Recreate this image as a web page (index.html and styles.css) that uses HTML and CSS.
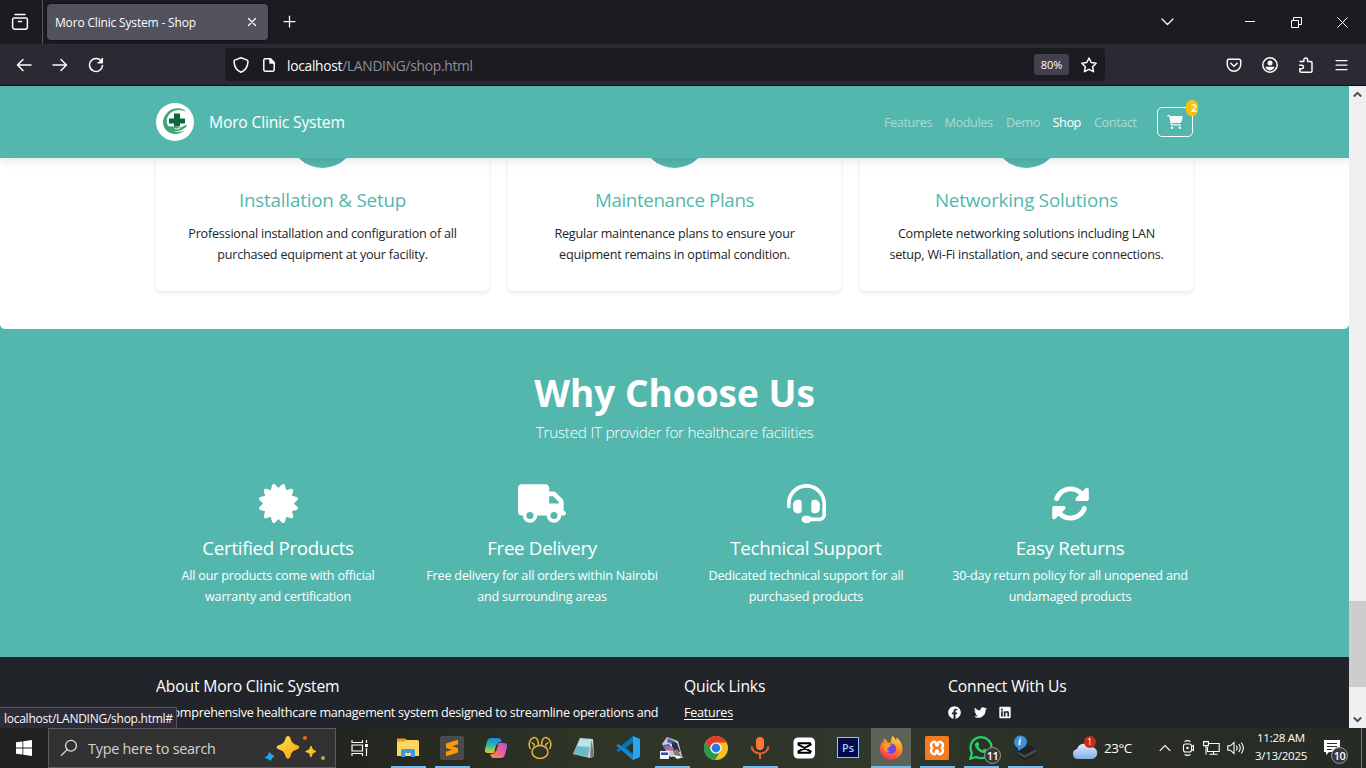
FILE: index.html
```
<!DOCTYPE html>
<html lang="en">
<head>
<meta charset="utf-8">
<title>Moro Clinic System - Shop</title>
<link rel="stylesheet" href="styles.css">
</head>
<body>
<div class="screen">
  <header class="tabbar">
    <div class="recent"><svg width="18" height="18" viewBox="0 0 18 18" class="ln"><path d="M4 1.6h10M3.2 5h11.6a1.6 1.6 0 0 1 1.6 1.6V14a2.2 2.2 0 0 1-2.2 2.2H3.8A2.2 2.2 0 0 1 1.600 14V6.600A1.600 1.600 0 0 1 3.200 5zM7.500 8.500h3"/></svg></div>
    <div class="tab"><span class="tab-title">Moro Clinic System - Shop</span><svg width="10" height="10" viewBox="0 0 10 10" class="ln thin"><path d="M1.500 1.500l7 7M8.500 1.500l-7 7"/></svg></div>
    <svg class="ln thin plus" width="14" height="14" viewBox="0 0 14 14"><path d="M6.500 1v11M1 6.500h11"/></svg>
    <div class="win">
      <svg class="ln thin" width="14" height="10" viewBox="0 0 14 10"><path d="M2 2l5.500 5.500L13 2"/></svg>
      <svg class="px w1" width="10" height="11" viewBox="0 0 10 11"><path d="M0 4.500h10"/></svg>
      <svg class="px w2" width="11" height="11" viewBox="0 0 11 11"><path d="M.5 3.500h7v7h-7zM2.500 3V.5h8v7H8"/></svg>
      <svg class="px w3" width="11" height="11" viewBox="0 0 11 11"><path d="M.5.5l10 10M10.500.5l-10 10"/></svg>
    </div>
  </header>
  <div class="toolbar">
    <div class="nav-btns">
      <svg class="ln" width="16" height="16" viewBox="0 0 16 16"><path d="M15 8H1.500M7 2.500L1.500 8 7 13.500"/></svg>
      <svg class="ln" width="16" height="16" viewBox="0 0 16 16"><path d="M1 8h13.500M9 2.500L14.500 8 9 13.500"/></svg>
      <svg class="ln" width="16" height="16" viewBox="0 0 16 16"><path d="M13.800 5A6.500 6.500 0 1 0 14.500 8.500M14.300 1.500v4.200h-4.200"/><path d="M15 .8V6H9.800z" fill="#fbfbfe" stroke="none"/></svg>
    </div>
    <div class="urlbar">
      <svg class="ln" width="16" height="16" viewBox="0 0 16 16"><path d="M8 .8l6.200 2.300c.9.4.8 1 .7 2C14.600 10 12 13.500 8 15.300 4 13.500 1.400 10 1.100 5.100c-.1-1-.2-1.600.7-2z"/></svg>
      <svg class="ln doc" width="12" height="14" viewBox="0 0 12 14"><path d="M2.500.8H7.500L11.200 4.500v7.200a1.500 1.500 0 0 1-1.500 1.500H2.300a1.500 1.500 0 0 1-1.500-1.500V2.300A1.500 1.500 0 0 1 2.500.8z"/><path d="M7 .8V5h4.200z" fill="#fbfbfe"/></svg>
      <span class="url">localhost<i>/LANDING/shop.html</i></span>
      <span class="zoom">80%</span>
      <svg class="ln star" width="16" height="16" viewBox="0 0 16 16"><path d="M8 1l2.200 4.500 5 .7-3.600 3.500.9 5L8 12.300 3.500 14.700l.9-5L.8 6.200l5-.7z"/></svg>
    </div>
    <div class="tools">
      <svg class="ln" width="16" height="16" viewBox="0 0 16 16"><path d="M2.800 2.300h10.400a1.500 1.500 0 0 1 1.500 1.500V7.500a6.700 6.700 0 0 1-13.400 0V3.800a1.500 1.500 0 0 1 1.500-1.500zM4.800 6.200L8 9.200l3.200-3"/></svg>
      <svg class="ln" width="16" height="16" viewBox="0 0 16 16"><circle cx="8" cy="8" r="7.200"/><circle cx="8" cy="6" r="2.500" fill="#fbfbfe" stroke="none"/><path d="M3.600 9.800h8.800c0 2-2 3.600-4.400 3.600s-4.400-1.600-4.400-3.600z" fill="#fbfbfe" stroke="none"/></svg>
      <svg class="ln" width="16" height="16" viewBox="0 0 16 16"><path d="M2 4.500h3.800V3a1.900 1.900 0 0 1 3.800 0v1.500h3.200a1.200 1.200 0 0 1 1.200 1.200V14a1.200 1.200 0 0 1-1.200 1.200H3A1.200 1.200 0 0 1 1.800 14v-2.300h2a1.700 1.700 0 0 0 0-3.400h-2"/></svg>
      <svg class="ln thin" width="14" height="16" viewBox="0 0 14 16"><path d="M1 3.500h11M1 8h11M1 12.500h11"/></svg>
    </div>
  </div>

  <div class="viewport">
    <main class="page">
      <nav class="site-nav">
        <div class="wrap nav-row">
          <svg class="logo" width="38" height="38" viewBox="0 0 38 38"><circle cx="19" cy="19" r="19" fill="#fff"/><path d="M30 8.500C26 4.500 18 4 12.500 8.500 6 14 5.500 22 10 27c5 5.500 14 5 18.500.5-4 2-10 2-14-1.500-5-4.500-5-12 0-16 4-3.500 10-4 15.500-1.500z" fill="#3fa572"/><path d="M11 23c3.500.5 5.500.3 8 .5 2 .3 3.500.5 5 1.300l6-2.800c1.500 0 1 1.300-.5 2.500-3.500 3-8 4.500-12.500 3.500-3-.7-5-2.500-6-5z" fill="#3fa572"/><path d="M18.500 25.600c2 .6 4 .5 5.500-.4" fill="none" stroke="#fff" stroke-width=".9"/><path d="M18 10.500h6v5h5v5h-5v3h-6v-3h-5v-5h5z" fill="#07693c"/></svg>
          <span class="brand">Moro Clinic System</span>
          <div class="menu"><a style="width:48px">Features</a><a style="width:49px">Modules</a><a style="width:34px">Demo</a><a class="on" style="width:29px">Shop</a><a style="width:44px">Contact</a></div>
          <div class="cart"><svg width="16" height="14" viewBox="0 0 576 512"><path d="M0 24C0 10.700 10.700 0 24 0H69.500c22 0 41.500 12.800 50.600 32h411c26.300 0 45.500 25 38.600 50.400l-41 152.300c-8.500 31.400-37 53.300-69.500 53.300H170.700l5.400 28.500c2.200 11.300 12.100 19.500 23.600 19.500H488c13.300 0 24 10.700 24 24s-10.700 24-24 24H199.700c-34.600 0-64.300-24.600-70.700-58.500L77.400 54.500c-.7-3.800-4-6.500-7.900-6.500H24C10.700 48 0 37.300 0 24zM128 464a48 48 0 1 1 96 0 48 48 0 1 1 -96 0zm336-48a48 48 0 1 1 0 96 48 48 0 1 1 0-96z"/></svg><b class="count">2</b></div>
        </div>
      </nav>
      <section class="services">
        <div class="wrap cards">
          <article class="card"><div class="disc"></div><h3 class="open">Installation &amp; Setup</h3><p>Professional installation and configuration of all<br>purchased equipment at your facility.</p></article>
          <article class="card"><div class="disc"></div><h3>Maintenance Plans</h3><p>Regular maintenance plans to ensure your<br>equipment remains in optimal condition.</p></article>
          <article class="card"><div class="disc"></div><h3 class="open">Networking Solutions</h3><p>Complete networking solutions including LAN<br>setup, Wi-Fi installation, and secure connections.</p></article>
        </div>
      </section>
      <section class="why">
        <h2>Why Choose Us</h2>
        <p class="lead">Trusted IT provider for healthcare facilities</p>
        <div class="features">
          <div class="feature"><svg width="39" height="39" viewBox="0 0 512 512"><path d="M211 7.300C205 1 196-1.400 187.600 .8s-14.900 8.900-17.100 17.300L154.700 80.600l-62-17.500c-8.400-2.400-17.400 0-23.500 6.100s-8.500 15.100-6.100 23.500l17.500 62L18.100 170.600c-8.400 2.100-15 8.700-17.300 17.100S1 205 7.300 211l46.200 45L7.300 301C1 307-1.400 316 .8 324.400s8.900 14.900 17.300 17.100l62.500 15.800-17.500 62c-2.400 8.400 0 17.400 6.100 23.500s15.100 8.500 23.500 6.100l62-17.500 15.800 62.500c2.100 8.400 8.700 15 17.100 17.300s17.300-.2 23.400-6.400l45-46.200 45 46.200c6.100 6.200 15 8.700 23.400 6.400s14.900-8.900 17.100-17.300l15.800-62.500 62 17.500c8.400 2.400 17.400 0 23.500-6.100s8.500-15.100 6.100-23.500l-17.500-62 62.500-15.800c8.400-2.100 15-8.700 17.300-17.100s-.2-17.300-6.400-23.400l-46.200-45 46.200-45c6.200-6.100 8.700-15 6.400-23.400s-8.900-14.900-17.300-17.100l-62.500-15.800 17.500-62c2.400-8.400 0-17.400-6.100-23.500s-15.100-8.500-23.500-6.100l-62 17.500L341.400 18.100c-2.100-8.400-8.700-15-17.100-17.300S307 1 301 7.300L256 53.500 211 7.300z"/></svg><h4>Certified Products</h4><p>All our products come with official<br>warranty and certification</p></div>
          <div class="feature"><svg width="48" height="39" viewBox="0 0 640 512"><path d="M48 0C21.500 0 0 21.500 0 48V368c0 26.500 21.500 48 48 48H64c0 53 43 96 96 96s96-43 96-96H384c0 53 43 96 96 96s96-43 96-96h32c17.700 0 32-14.300 32-32s-14.300-32-32-32V237.300c0-17-6.700-33.300-18.700-45.300L512 114.700c-12-12-28.300-18.700-45.300-18.700H416V48c0-26.500-21.500-48-48-48H48zM416 160h50.700L544 237.300V256H416V160zM112 416a48 48 0 1 1 96 0 48 48 0 1 1 -96 0zm368-48a48 48 0 1 1 0 96 48 48 0 1 1 0-96z"/></svg><h4>Free Delivery</h4><p>Free delivery for all orders within Nairobi<br>and surrounding areas</p></div>
          <div class="feature"><svg width="39" height="39" viewBox="0 0 512 512"><path d="M256 48C141.100 48 48 141.100 48 256v40c0 13.300-10.700 24-24 24s-24-10.700-24-24V256C0 114.600 114.600 0 256 0S512 114.600 512 256V400.100c0 48.600-39.400 88-88.100 88L313.600 488c-8.300 14.300-23.800 24-41.600 24H240c-26.500 0-48-21.500-48-48s21.500-48 48-48h32c17.800 0 33.300 9.700 41.600 24l110.400 .1c22.100 0 40-17.900 40-40V256c0-114.900-93.100-208-208-208zM144 208h16c17.700 0 32 14.300 32 32V352c0 17.700-14.300 32-32 32H144c-35.300 0-64-28.700-64-64V272c0-35.300 28.700-64 64-64zm224 0c35.300 0 64 28.700 64 64v48c0 35.300-28.700 64-64 64H352c-17.700 0-32-14.300-32-32V240c0-17.700 14.300-32 32-32h16z"/></svg><h4>Technical Support</h4><p>Dedicated technical support for all<br>purchased products</p></div>
          <div class="feature"><svg width="39" height="39" viewBox="0 0 512 512"><path d="M142.900 142.900c62.200-62.200 162.700-62.500 225.300-1L327 183c-6.900 6.900-8.900 17.200-5.200 26.200s12.500 14.800 22.200 14.800H472c13.300 0 24-10.700 24-24V72c0-9.700-5.800-18.500-14.800-22.200s-19.300-1.700-26.200 5.200L413.400 96.600c-87.600-86.500-228.700-86.200-315.800 1C73.200 122 55.600 150.700 44.800 181.400c-5.900 16.700 2.900 34.900 19.500 40.800s34.900-2.900 40.800-19.500c7.700-21.800 20.200-42.300 37.800-59.800zM16 312V440c0 9.700 5.800 18.500 14.800 22.200s19.300 1.700 26.200-5.200l41.600-41.600c87.600 86.500 228.700 86.200 315.800-1c24.400-24.400 42.100-53.100 52.900-83.700c5.900-16.700-2.900-34.900-19.500-40.800s-34.900 2.900-40.800 19.500c-7.700 21.800-20.200 42.300-37.800 59.800c-62.200 62.200-162.700 62.500-225.300 1L185 329c6.900-6.900 8.900-17.200 5.200-26.200s-12.500-14.800-22.200-14.800H40c-13.300 0-24 10.700-24 24z"/></svg><h4>Easy Returns</h4><p>30-day return policy for all unopened and<br>undamaged products</p></div>
        </div>
      </section>
      <footer class="foot">
        <div class="wrap foot-row">
          <div class="about"><h5>About Moro Clinic System</h5><p>A comprehensive healthcare management system designed to streamline operations and</p></div>
          <div class="links"><h5>Quick Links</h5><p><u>Features</u></p></div>
          <div class="social"><h5>Connect With Us</h5><div class="soc">
            <svg width="13" height="13" viewBox="0 0 512 512"><path d="M504 256C504 119 393 8 256 8S8 119 8 256c0 123.780 90.690 226.380 209.250 245V327.690h-63V256h63v-54.640c0-62.150 37-96.480 93.670-96.480 27.140 0 55.520 4.840 55.520 4.840v61h-31.280c-30.800 0-40.410 19.120-40.410 38.730V256h68.780l-11 71.690h-57.780V501C413.310 482.380 504 379.780 504 256z"/></svg>
            <svg width="13" height="13" viewBox="0 0 512 512"><path d="M459.370 151.716c.325 4.548.325 9.097.325 13.645 0 138.720-105.583 298.558-298.558 298.558-59.452 0-114.680-17.219-161.137-47.106 8.447.974 16.568 1.299 25.340 1.299 49.055 0 94.213-16.568 130.274-44.832-46.132-.975-84.792-31.188-98.112-72.772 6.498.974 12.995 1.624 19.818 1.624 9.421 0 18.843-1.300 27.614-3.573-48.081-9.747-84.143-51.980-84.143-102.985v-1.299c13.969 7.797 30.214 12.670 47.431 13.319-28.264-18.843-46.781-51.005-46.781-87.391 0-19.492 5.197-37.360 14.294-52.954 51.655 63.675 129.300 105.258 216.365 109.807-1.624-7.797-2.599-15.918-2.599-24.040 0-57.828 46.782-104.934 104.934-104.934 30.213 0 57.502 12.670 76.670 33.137 23.715-4.548 46.456-13.320 66.599-25.340-7.798 24.366-24.366 44.833-46.132 57.827 21.117-2.273 41.584-8.122 60.426-16.243-14.292 20.791-32.161 39.308-52.628 54.253z"/></svg>
            <svg width="12" height="13" viewBox="0 0 448 512"><path d="M416 32H31.900C14.300 32 0 46.500 0 64.300v383.400C0 465.500 14.300 480 31.900 480H416c17.600 0 32-14.500 32-32.300V64.300c0-17.800-14.400-32.300-32-32.300zM135.400 416H69V202.200h66.500V416zm-33.200-243c-21.300 0-38.500-17.300-38.500-38.500S80.900 96 102.200 96c21.200 0 38.500 17.300 38.500 38.500 0 21.300-17.200 38.500-38.500 38.500zm282.100 243h-66.400V312c0-24.800-.5-56.700-34.500-56.700-34.600 0-39.900 27-39.900 54.900V416h-66.400V202.200h63.700v29.200h.9c8.900-16.800 30.600-34.500 62.200-34.500 66.500 0 78.900 43.800 78.900 100.900V416z"/></svg>
          </div></div>
        </div>
      </footer>
      <div class="status">localhost/LANDING/shop.html#</div>
    </main>
    <div class="scroll">
      <svg width="9" height="7" viewBox="0 0 9 7"><path d="M.8 5.500L4.500 1.800 8.200 5.500"/></svg>
      <div class="thumb"></div>
      <svg width="9" height="7" viewBox="0 0 9 7"><path d="M.8 1.500L4.500 5.200 8.200 1.500"/></svg>
    </div>
  </div>

  <div class="taskbar">
    <div class="start"><svg width="16" height="16" viewBox="0 0 16 16" fill="#fff"><path d="M0 2.300L6.500 1.400V7.600H0zM7.300 1.300L16 0v7.600H7.300zM0 8.400h6.500v6.200L0 13.700zM7.300 8.400H16V16l-8.700-1.300z"/></svg></div>
    <div class="search">
      <svg width="18" height="18" viewBox="0 0 18 18" fill="none" stroke="#ddd" stroke-width="1.300"><circle cx="11" cy="6.700" r="5.400"/><path d="M7.200 10.600L1 16.700"/></svg>
      <span>Type here to search</span>
      <svg class="sparks" width="62" height="26" viewBox="0 0 62 26"><defs><linearGradient id="gold" x1="0" y1="0" x2="1" y2="1"><stop offset="0" stop-color="#ffe15a"/><stop offset="1" stop-color="#f5a300"/></linearGradient></defs><path d="M24 1c1.200 0 2 .8 2.500 2.500 1.200 4 2.500 5.400 6.500 6.600 3 1 3 3.500 0 4.400-4 1.200-5.300 2.600-6.500 6.500-.8 3.500-4 3.500-5 0-1.200-3.900-2.500-5.300-6.500-6.500-3-.9-3-3.400 0-4.400 4-1.200 5.300-2.600 6.500-6.600C22 1.800 22.800 1 24 1z" fill="url(#gold)"/><path d="M47 11l1.600 3.700L52 16.500l-3.400 1.600L47 22l-1.600-3.900-3.700-1.600 3.700-1.800z" fill="url(#gold)" stroke="#f9bd25"/><path d="M5.500 17.500l1.500 2.200 2.800 1.200-2 2-1.300 2.500-2.200-1.700-3-1.200 2.800-1.700z" fill="#20a9ee" stroke="#20a9ee"/><circle cx="41" cy="3" r="2.100" fill="#ee6224"/><circle cx="59" cy="23" r="2.100" fill="#82c341"/></svg>
    </div>
    <div class="apps">
      <div class="app tv"><svg width="18" height="16" viewBox="0 0 18 16" fill="none" stroke="#fff" stroke-width="1.200"><path d="M1 0v2.500h10.500V0M1 16v-2.500h10.500V16M1 5h10.500v6H1zM15.500 0v3M15.500 8v8"/><path d="M14 4h3v3h-3z" fill="#fff" stroke="none"/></svg></div>
      <div class="app run"><svg width="24" height="24" viewBox="0 0 24 24"><path d="M1 4.500A1.500 1.500 0 0 1 2.500 3H9l2 1h10.500A1.500 1.500 0 0 1 23 5.500V20H1z" fill="#ffd561"/><path d="M1 2.500h8L10.500 4 9 5.500H1z" fill="#e5a313"/><path d="M5 21v-6.500A1.500 1.500 0 0 1 6.500 13h11a1.500 1.500 0 0 1 1.500 1.500V21h-4v-4H9v4z" fill="#3a9be4"/></svg></div>
      <div class="app run"><svg width="24" height="24" viewBox="0 0 24 24"><rect width="24" height="24" rx="2" fill="#4b4b4d"/><path d="M6 7.500l12-3.700v4.500l-6 2 6 1.700v4.500L6 20.200v-4.500l6-2-6-1.700z" fill="#ff9800"/></svg></div>
      <div class="app"><svg width="24" height="24" viewBox="0 0 24 24"><defs><linearGradient id="cpa" x1="0" y1="0" x2="0" y2="1"><stop offset="0" stop-color="#1a86e8"/><stop offset=".5" stop-color="#32b8a0"/><stop offset="1" stop-color="#e8cf29"/></linearGradient><linearGradient id="cpb" x1="1" y1="0" x2="0" y2="1"><stop offset="0" stop-color="#a455e0"/><stop offset=".5" stop-color="#ef6292"/><stop offset="1" stop-color="#fb8e4b"/></linearGradient></defs><path d="M7 2h7.500c2 0 2.700 1.500 3.200 4h-2.200c-1.500 0-2 1-2.500 2.500L11 15c-.5 1.500-1 2-3 2H4c-2.500 0-3.700-1.500-3-4L3 5.500C3.700 3 5 2 7 2z" fill="url(#cpa)"/><path d="M17 22H9.500c-2 0-2.700-1.500-3.200-4h2.200c1.500 0 2-1 2.500-2.500L13 9c.5-1.500 1-2 3-2h4c2.500 0 3.700 1.500 3 4l-2 7.500c-.7 2.500-2 3.500-4 3.500z" fill="url(#cpb)"/><path d="M12.500 8.500h1.700L12 15.500h-1.700z" fill="#2c3226"/></svg></div>
      <div class="app"><svg width="24" height="24" viewBox="0 0 24 24" fill="none" stroke="#e2b53f" stroke-width="1.500"><ellipse cx="12" cy="16" rx="8" ry="6.500"/><path d="M2.500 13C-.5 8 2 2.500 6 1.500c3-.5 4.500 3.500 4.500 8M21.500 13c3-5 .5-10.500-3.500-11.500-3-.5-4.500 3.500-4.500 8M6.300 10.500C6.500 8 5 6.500 3.500 7M17.700 10.500c-.2-2.500 1.300-4 2.800-3.500"/></svg></div>
      <div class="app"><svg width="24" height="24" viewBox="0 0 24 24"><path d="M8 2l13 1 1 17-4 2L1 18z" fill="#d0d8d8"/><path d="M8 3l11 1-3 17L1 18z" fill="#6fb9c6"/><path d="M8 3l11 1-1.500 7L5 10z" fill="#b9e6ea"/><path d="M19.500 4l2.500 16-4 1z" fill="#77796a"/></svg></div>
      <div class="app"><svg width="24" height="24" viewBox="0 0 24 24"><path d="M17 0v24L5.500 13.200 2.500 16 0 14.500 8 7.500z" fill="#0873ba"/><path d="M0 9.500L2.500 8 17 19.500V24L5 13.700z" fill="#1687cf"/><path d="M17 0l7 3v18l-7 3V18.500V6.500z" fill="#29a4ee"/><path d="M17 6.500v11L10 12z" fill="#2b3325"/></svg></div>
      <div class="app run"><svg width="24" height="24" viewBox="0 0 24 24"><path d="M7 1l11 4 4 15-12 1L2 8z" fill="#c9c9dc"/><path d="M8 2l8 4-2 3-7-3zM3 9l6-1 3 5H4z" fill="#5563ad"/><path d="M12 6l5 1 3 9-8-2z" fill="#283047"/><path d="M5 10l8 1 1 4-9-1z" fill="#b06a9c"/><path d="M13 15l4-2 4 7-6 1z" fill="#8c7872"/><path d="M0 15h9v8H0z" fill="#f3f3f8"/><path d="M1 16.500h7V19H1z" fill="#254cc4"/><path d="M13 19l11 2-7 2z" fill="#fff"/></svg></div>
      <div class="app"><svg width="24" height="24" viewBox="0 0 24 24"><circle cx="12" cy="12" r="12" fill="#fbc116"/><path d="M1.600 6A12 12 0 0 1 22.400 6L22.400 6.500H12A5.500 5.500 0 0 0 6.900 14z" fill="#e33b2e"/><path d="M1.600 6A12 12 0 0 0 11 24l5.500-9A5.500 5.500 0 0 1 7.200 14.700z" fill="#249b50"/><circle cx="12" cy="12" r="5.600" fill="#fff"/><circle cx="12" cy="12" r="4.400" fill="#2878e5"/></svg></div>
      <div class="app run"><svg width="24" height="24" viewBox="0 0 24 24"><rect x="8" y="1" width="8" height="13" rx="4" fill="#ff7533"/><path d="M3.700 10.500a8.300 7 0 0 0 16.600 0M12 17.500V23" fill="none" stroke="#e8642b" stroke-width="2"/></svg></div>
      <div class="app"><svg width="24" height="24" viewBox="0 0 24 24"><rect x="1.500" y="1.500" width="21.500" height="21" rx="4.500" fill="#fff"/><path d="M19.500 8.200L6.500 15.300v1.500h11.500v-2M19.500 15.800L6.500 8.700V7.200h11.500v2" fill="none" stroke="#000" stroke-width="1.900"/></svg></div>
      <div class="app"><div class="ps">Ps</div></div>
      <div class="app run fox"><svg width="24" height="24" viewBox="0 0 24 24"><defs><linearGradient id="fire" x1=".8" y1="0" x2=".3" y2="1"><stop offset="0" stop-color="#ffe14a"/><stop offset=".45" stop-color="#ff8a22"/><stop offset="1" stop-color="#f5315e"/></linearGradient></defs><path d="M13.500 0c1.500 1 2.500 2.500 3 4 1-.2 1.300-1.300 1-2.500C21 4 23.500 8 23.500 13c0 6-5 10.500-11.500 10.500S1 19 1 13c0-3.500 1-5.500 2.500-7.500l.3 2C4.600 6.500 5 4 4.800 2.500 7 3.500 8 5 9 6.500h3C12 3.500 12.500 1.500 13.500 0z" fill="url(#fire)"/><circle cx="12.200" cy="12.700" r="5" fill="#7048d8"/><path d="M4 8.500c3-2 7-1 9 1-2 .5-3 1-3.500 2.500-2 .5-1.500 3 1.500 3.800-4 1-7-1.800-7-7.300z" fill="#ff9b25"/></svg></div>
      <div class="app run"><svg width="24" height="24" viewBox="0 0 24 24"><rect width="24" height="24" rx="1.500" fill="#f47a20"/><path d="M7.500 6.500c2-1.500 3.500-.5 3.500 1.300 0 1.500.5 1.700 1 1.700s1-.2 1-1.700c0-1.800 1.500-2.800 3.500-1.300 2 1.400 1.800 3.700.3 5.500 1.500 1.800 1.700 4.100-.3 5.500-2 1.500-3.500.5-3.500-1.300 0-1.500-.5-1.700-1-1.700s-1 .2-1 1.700c0 1.800-1.500 2.800-3.500 1.300-2-1.400-1.800-3.700-.3-5.500-1.500-1.800-1.700-4.100.3-5.500z" fill="none" stroke="#fff" stroke-width="2.500"/></svg></div>
      <div class="app run"><svg width="24" height="24" viewBox="0 0 24 24"><path d="M1.300 22.700l1.600-5.800A10.500 10.500 0 1 1 7.200 21z" fill="none" stroke="#25d366" stroke-width="2.200"/><path d="M8 6c.8-.3 1.200 0 1.500.8l.7 1.900c-.1.700-.7 1.100-1 1.600 1 2 2.400 3.200 4.400 4l1.300-1.400c.5-.5 2.200.6 3 1.100.3 2.300-2 3.500-4 3C9.500 16 6.500 12 6 9c0-1.300.8-2.600 2-3z" fill="#25d366"/></svg><span class="badge wa">11</span></div>
      <div class="app run info"><svg width="24" height="26" viewBox="0 0 24 26"><path d="M4 15l9-6 10 4v7l-11 5-7-3z" fill="#202226"/><path d="M5 17l7 3 11-6v3l-11 6-7-4z" fill="#484a4c"/><circle cx="7.500" cy="7" r="6.500" fill="#3d91dc"/><path d="M5 11l0 5 5-3z" fill="#3d91dc"/></svg><em>i</em></div>
    </div>
    <div class="weather"><svg width="26" height="26" viewBox="0 0 26 26"><defs><linearGradient id="cloud" x1="0" y1="0" x2="0" y2="1"><stop offset="0" stop-color="#dfecff"/><stop offset="1" stop-color="#82aee8"/></linearGradient></defs><path d="M6 24a5 5 0 0 1-1-9.900A7.500 7.500 0 0 1 18.500 12 6 6 0 0 1 20 24z" fill="url(#cloud)"/><circle cx="18" cy="7" r="6" fill="#c42b1c"/></svg><sup>1</sup><span>23°C</span></div>
    <div class="tray">
      <svg width="12" height="8" viewBox="0 0 12 8"><path d="M.7 6.800L6 1.500l5.300 5.300"/></svg>
      <svg width="14" height="16" viewBox="0 0 14 16"><rect x="1.500" y="4" width="8" height="8" rx="2"/><path d="M9.500 6.700L11.500 5.500v5l-2-1.200M2.500 1.500c2-1.100 4-1.100 6 0M2.500 14.500c2 1.100 4 1.100 6 0"/><circle cx="5.500" cy="8" r=".7"/></svg>
      <svg width="17" height="16" viewBox="0 0 17 16"><path d="M5.500 3.500h10.700v8H4.500V7M10.500 11.500v2.700M6.500 14.300h8M.6 1.600h4.800v4H.6zM3 5.600v9"/></svg>
      <svg width="18" height="16" viewBox="0 0 18 16"><path d="M.8 5.800h2.500L7 2.500v11L3.300 10.200H.8zM9.300 5.500c1 1.500 1 3.500 0 5M11.800 4c1.800 2.500 1.800 5.500 0 8M14.300 2.500c2.600 3.500 2.600 7.500 0 11"/></svg>
    </div>
    <div class="clock"><span>11:28 AM</span><span class="date">3/13/2025</span></div>
    <div class="notes"><svg width="17" height="17" viewBox="0 0 17 17"><path d="M0 1h16v12H5l-3 3v-3H0z" fill="#fff"/><path d="M3 4.500h10M3 7.500h10M3 10.500h5" stroke="#2a2e26"/></svg><span class="badge">10</span></div>
    <div class="peek"></div>
  </div>
</div>
</body>
</html>
```
FILE: styles.css
```
* { box-sizing: border-box; }
body { margin: 0; background: #000; font-family: "Open Sans", "Noto Sans", sans-serif; overflow: hidden; }
h2, h3, h4, h5, p { margin: 0; font-weight: 400; white-space: nowrap; }
svg { display: block; flex: none; }
.screen { width: 1366px; height: 768px; display: flex; flex-direction: column; }
.ln { fill: none; stroke: #fbfbfe; stroke-width: 1.5; stroke-linecap: round; stroke-linejoin: round; }
.ln.thin { stroke-width: 1.25; }
.px { fill: none; stroke: #fff; stroke-width: 1; }

/* browser window */
.tabbar { height: 44px; background: #1c1b22; display: flex; align-items: center; flex: none; }
.recent { width: 43px; height: 44px; border-right: 1px solid #56555d; display: flex; align-items: center; padding-left: 11px; }
.tab { width: 221px; height: 36px; margin-left: 4px; background: #52525e; border-radius: 4px; display: flex; align-items: center; justify-content: space-between; padding: 0 11px 0 8px; color: #fbfbfe; box-shadow: 0 0 2px #000; }
.tab-title { font-size: 12px; letter-spacing: -.17px; }
.plus { margin-left: 15px; }
.win { margin-left: auto; display: flex; align-items: center; padding-right: 18px; }
.w1 { margin-left: 71px; } .w2 { margin-left: 36px; } .w3 { margin-left: 35px; }
.toolbar { height: 42px; background: #2b2a33; border-bottom: 1px solid #0c0c0d; display: flex; align-items: center; flex: none; }
.nav-btns { display: flex; gap: 20px; padding-left: 16px; width: 225px; }
.urlbar { width: 880px; height: 33px; background: #1c1b22; border-radius: 4px; display: flex; align-items: center; padding: 0 8px; color: #fbfbfe; }
.doc { margin-left: 14px; }
.url { margin-left: 12px; padding-top: 1px; font-size: 13.8px; letter-spacing: -.29px; } .url i { font-style: normal; color: #8f8f98; }
.zoom { margin-left: auto; width: 35px; height: 21px; line-height: 22px; text-align: center; font-size: 11px; background: #42414d; border-radius: 3px; }
.star { margin-left: 12px; }
.tools { display: flex; gap: 20.2px; padding-left: 121px; }

.viewport { height: 642px; display: flex; flex: none; }
.page { width: 1349px; background: #54b7ad; position: relative; overflow: hidden; display: flex; flex-direction: column; }
.wrap { width: 1037px; margin-left: 156px; }

.site-nav { height: 72px; flex: none; background: #54b7ad; color: #fff; position: relative; z-index: 2; box-shadow: 0 2px 10px rgba(0,0,0,.12); }
.nav-row { height: 72px; display: flex; align-items: center; }
.brand { margin-left: 15px; font-size: 15.7px; letter-spacing: -.2px; }
.menu { margin-left: auto; display: flex; gap: 12.500px; font-size: 12.7px; letter-spacing: -.42px; color: #a9dbd6; }
.menu a { white-space: nowrap; } .menu .on { color: #fff; }
.cart { margin-left: 19px; width: 36px; height: 30px; border: 1px solid #fff; border-radius: 5px; display: flex; align-items: center; justify-content: center; position: relative; }
.cart svg { fill: #f8f9fa; }
.count { position: absolute; left: 28px; top: -8px; width: 12px; height: 16px; line-height: 17px; padding-left: 4px; text-align: center; border-radius: 6px; background: #ffc107; font-size: 10px; }

.services { height: 171px; flex: none; background: #fff; border-radius: 0 0 5px 5px; }
.cards { display: grid; grid-template-columns: repeat(3, 333px); gap: 19px; }
.card { height: 133px; border-radius: 0 0 5px 5px; box-shadow: 0 2px 5px rgba(0,0,0,.09); text-align: center; display: flex; flex-direction: column; align-items: center; color: #212529; }
.disc { width: 65px; height: 64px; margin-top: -54px; border-radius: 50%; background: #54b7ad; flex: none; }
.card h3 { margin-top: 20px; font-size: 18.8px; letter-spacing: -.38px; line-height: 24px; color: #54b7ad; }
.card h3.open { letter-spacing: -.2px; }
.card p { margin-top: 11px; font-size: 12.6px; letter-spacing: -.22px; line-height: 21px; }

.why { height: 328px; flex: none; color: #fff; text-align: center; }
.why h2 { margin-top: 39px; font-size: 37px; font-weight: 700; line-height: 50px; }
.why .lead { margin-top: 3px; font-size: 15.4px; letter-spacing: -.3px; font-weight: 300; line-height: 24px; }
.features { width: 1056px; margin: 39px 0 0 146px; display: grid; grid-template-columns: repeat(4, 264px); }
.feature { display: flex; flex-direction: column; align-items: center; }
.feature svg { fill: #fff; height: 39px; }
.feature h4 { margin-top: 13px; font-size: 18.8px; letter-spacing: -.34px; line-height: 24px; }
.feature p { margin-top: 5px; font-size: 12.6px; letter-spacing: -.19px; line-height: 21px; }

.foot { height: 71px; flex: none; background: #212529; color: #fff; }
.foot-row { display: grid; grid-template-columns: 528px 264px 1fr; padding-top: 18px; }
.foot h5 { font-size: 15.7px; letter-spacing: -.17px; line-height: 22px; }
.foot p { font-size: 12.6px; letter-spacing: -.26px; line-height: 20px; margin-top: 6px; }
.foot u { text-underline-offset: 2px; }
.soc { display: flex; gap: 12.500px; margin-top: 9px; } .soc svg { fill: #f8f9fa; }
.status { position: absolute; left: 0; bottom: 0; width: 177px; height: 21px; background: #2d2c36; border: solid #55545d; border-width: 1px 1px 0 0; color: #fbfbfe; font-size: 12px; letter-spacing: -.26px; line-height: 21px; padding-left: 4px; white-space: nowrap; }

.scroll { width: 17px; background: #f0f0f0; display: flex; flex-direction: column; align-items: center; padding: 5px 0 5px; }
.scroll svg { fill: none; stroke: #505050; stroke-width: 2; }
.thumb { width: 17px; height: 86px; margin-top: 503px; margin-bottom: auto; background: #cdcdcd; }

/* desktop taskbar */
.taskbar { height: 40px; display: flex; background: linear-gradient(90deg, #20211f, #22251f 25%, #2e3426 42%, #30372b 65%, #292d26 80%, #262b25); color: #fff; flex: none; }
.taskbar > div { flex: none; }
.start { width: 48px; display: flex; align-items: center; justify-content: center; }
.search { width: 288px; height: 40px; background: #323232; border: 1px solid #5d5d5d; display: flex; align-items: center; padding-left: 11px; color: #d2d2d2; font-size: 14.4px; letter-spacing: -.25px; }
.search span { width: 128px; margin-left: 10px; white-space: nowrap; } .sparks { margin-left: 48px; }
.apps { display: flex; }
.app { width: 44px; height: 40px; display: flex; flex: none; align-items: center; justify-content: center; position: relative; }
.tv { width: 48px; margin-right: 2px; }
.run { background: linear-gradient(#76b9ed, #76b9ed) center bottom / 35px 2px no-repeat; }
.fox { width: 40px; margin: 0 4px 0 1px; background: linear-gradient(#76b9ed, #76b9ed) bottom / 100% 2px no-repeat, #5d6357; }
.ps { width: 22px; height: 21px; margin-top: -2px; border: 1px solid #8bc5ff; background: #050a4c; color: #9fd0ff; font-size: 11px; font-weight: 600; line-height: 19px; text-align: center; }
.badge { position: absolute; left: 25px; top: 19px; width: 17px; height: 17px; border-radius: 50%; border: 1px solid #999; background: #343a37; font-size: 11px; font-weight: 600; line-height: 15px; text-align: center; letter-spacing: -.5px; }
.app em { position: absolute; left: 15px; top: 7px; font: italic bold 11px "Liberation Serif", serif; }
.weather { margin-left: 25px; width: 62px; display: flex; align-items: center; position: relative; font-size: 13.4px; }
.weather sup { position: absolute; left: 15px; top: 7px; font-size: 9px; line-height: 13px; }
.weather span { margin-left: 6px; letter-spacing: -.4px; }
.tray { display: flex; align-items: center; gap: 7px; margin-left: 25px; width: 87px; }
.tray svg { fill: none; stroke: #fff; stroke-width: 1.1; } .tray svg:first-child { margin-right: 4px; }
.clock { width: 70px; display: flex; flex-direction: column; align-items: center; font-size: 11.6px; line-height: 18px; padding-top: 1px; letter-spacing: -.3px; }
.notes { position: relative; width: 44px; padding: 11px 0 0 8px; } .notes .badge { left: 15px; }
.peek { margin-left: auto; width: 5px; border-left: 1px solid #777; }
```
